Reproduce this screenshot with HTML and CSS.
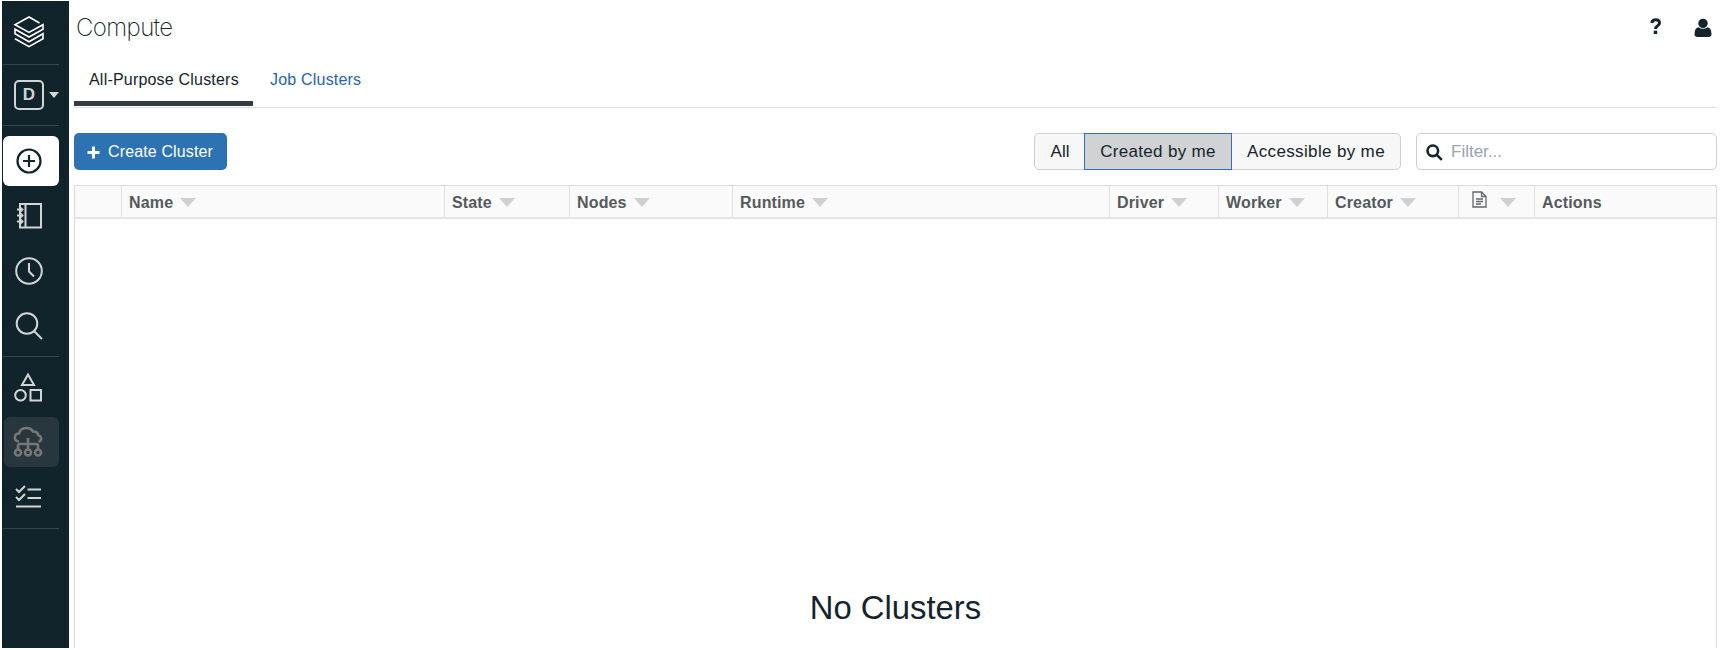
FILE: index.html
```html
<!DOCTYPE html>
<html lang="en">
<head>
<meta charset="utf-8">
<title>Compute</title>
<link rel="stylesheet" href="styles.css">
</head>
<body>
<div class="app">
  <nav class="sidebar">
    <a class="logo"><svg width="32" height="34" viewBox="0 0 32 34"><path d="M26.500 8 16 2 2 9.700 16 17.400 30 9.700V14.200L16 22 2 14.200V18.700L16 26.800 30 18.700V23.700L16 31.700 2 23.700"/></svg></a>
    <div class="workspace"><span class="badge">D</span><i class="caret"></i></div>
    <a class="item create"><svg width="28" height="28" viewBox="0 0 28 28"><circle cx="14" cy="14" r="11.5"/><path d="M14 8v12M8 14h12"/></svg></a>
    <a class="item"><svg width="28" height="28" viewBox="0 0 28 28"><path d="M5 2h21v23.5H5zM10.500 2v23.500M2 7.500h5M2 13.500h5M2 19.500h5"/><path class="thin" d="M5 5l3 2.500-3 3 3 3-3 3 3 3-3 3"/></svg></a>
    <a class="item"><svg width="28" height="28" viewBox="0 0 28 28"><circle cx="14" cy="14" r="12.800"/><path d="M14 6v8.500l5 5"/></svg></a>
    <a class="item"><svg width="28" height="28" viewBox="0 0 28 28"><circle cx="12" cy="11.500" r="10.300"/><path d="M19 19l8 8"/></svg></a>
    <div class="group">
      <a class="item"><svg width="30" height="30" viewBox="0 0 30 30"><path d="M15 2.500 21 13H9zM17.500 18h10.500v10.500H17.500z"/><circle cx="7.500" cy="23.300" r="5.300"/></svg></a>
      <a class="item active"><svg width="30" height="32" viewBox="0 0 30 32"><path d="M6 15.500C.5 15 .5 8 6 7.500 8 .5 17 .5 20 5.500c4 0 5 2 5 3.500 4 1 4 6 .5 6.500M15 12v12M5 24v-4q0-2 2-2h16q2 0 2 2v4"/><circle cx="5" cy="26.500" r="3"/><circle cx="15" cy="26.500" r="3"/><circle cx="25" cy="26.500" r="3"/></svg></a>
      <a class="item list"><svg width="28" height="28" viewBox="0 0 28 28"><path d="M2 6l3 3 6-6M2 14l3 3 6-6M13.500 6.500H27M13.500 15H27M2 23.500h25"/></svg></a>
    </div>
  </nav>
  <main class="main">
    <header class="header">
      <h1>Compute</h1>
      <div class="tools">
        <svg width="12" height="17" viewBox="0 0 12 17"><path class="question" d="M1.800 5C2.300 .8 9.500 .6 9.500 5c0 3-4 2.800-4 6"/><path class="solid" d="M3.700 12.700h3.500V16H3.700z"/></svg>
        <svg width="18" height="20" viewBox="0 0 18 20"><circle cx="9" cy="5.400" r="4.700"/><path d="M4.500 9.200Q9 12.500 13.500 9.200 17.500 10 17.500 16q0 3-3 3h-11q-3 0-3-3Q.5 10 4.500 9.200"/></svg>
      </div>
    </header>
    <div class="tabs"><a class="tab current"><span>All-Purpose Clusters</span></a><a class="tab"><span>Job Clusters</span></a></div>
    <div class="toolbar">
      <button class="primary"><svg width="13" height="13" viewBox="0 0 13 13"><path d="M6.500 .5v12M.5 6.500h12"/></svg><span>Create Cluster</span></button>
      <div class="filters">
        <button class="seg all">All</button><button class="seg mine">Created by me</button><button class="seg access">Accessible by me</button>
      </div>
      <div class="search"><svg width="17" height="17" viewBox="0 0 17 17"><circle cx="6.800" cy="6.800" r="5.300"/><path d="M10.800 10.800l5 5"/></svg><span>Filter...</span></div>
    </div>
    <section class="table">
      <div class="thead">
        <div></div>
        <div>Name<i class="sort"></i></div>
        <div>State<i class="sort"></i></div>
        <div>Nodes<i class="sort"></i></div>
        <div>Runtime<i class="sort"></i></div>
        <div>Driver<i class="sort"></i></div>
        <div>Worker<i class="sort"></i></div>
        <div>Creator<i class="sort"></i></div>
        <div class="doc"><svg width="15" height="17" viewBox="0 0 15 17"><path d="M1 1h8.500L14 5.500V16H1zM9.500 1v4.500H14M4 8h7M4 10.500h7M4 13h5"/></svg><i class="sort"></i></div>
        <div>Actions</div>
      </div>
      <div class="empty">No Clusters</div>
    </section>
  </main>
</div>
</body>
</html>
```
FILE: styles.css
```css
* { box-sizing: border-box; }
body { margin: 0; background: #fff; font-family: "Liberation Sans", Arial, sans-serif; font-size: 16px; color: #15242c; }
.app { display: flex; width: 1725px; height: 650px; padding: 1px 8px 2px 2px; overflow: hidden; }
svg { display: block; flex: none; fill: none; }

.sidebar { width: 67px; flex: none; background: #11232b; }
.sidebar svg { stroke: #d2d5d6; stroke-width: 2; }
.logo { display: flex; width: 56px; height: 64px; margin-left: 1px; padding: 14px 0 0 10px; border-bottom: 1px solid #3b464c; }
.sidebar .logo svg { stroke: #fff; stroke-width: 1.6; }
.workspace { display: flex; align-items: center; width: 56px; height: 61px; margin-left: 1px; padding: 0 0 0 11px; border-bottom: 1px solid #3b464c; }
.badge { display: flex; align-items: center; justify-content: center; width: 30px; height: 30px; border: 2px solid #d2d5d6; border-radius: 5px; color: #d2d5d6; font-weight: bold; font-size: 17px; }
.caret { margin-left: 5px; border: 5px solid transparent; border-top: 6px solid #d2d5d6; border-bottom: 0; }
.item { display: flex; align-items: center; justify-content: center; width: 55px; height: 50px; margin: 0 0 5px 2px; padding-right: 5px; border-radius: 6px; }
.item .thin { stroke-width: 1.2; }
.create { width: 56px; margin: 10px 0 5px 1px; background: #fff; }
.sidebar .create svg { stroke: #11232b; stroke-width: 2.2; }
.group { width: 56px; height: 173px; margin: 0 0 0 1px; padding-top: 5px; border: solid #3b464c; border-width: 1px 0; }
.group .item { margin-left: 1px; padding-right: 7px; }
.active { background: #28363d; }
.sidebar .active svg { stroke: #777776; stroke-width: 2.6; }
.list svg { stroke-width: 2; }

.main { display: flex; flex-direction: column; flex: 1; min-width: 0; padding-left: 5px; }
.header { display: flex; align-items: flex-start; justify-content: space-between; height: 54px; padding: 10px 5px 0 2px; }
h1 { margin: 0; font-family: Inter, "Liberation Sans", sans-serif; font-size: 24px; font-weight: 200; line-height: 34px; letter-spacing: -.6px; }
.tools { display: flex; gap: 32px; padding-top: 7px; }
.tools svg { fill: #15242c; }
.tools .question { fill: none; stroke: #15242c; stroke-width: 3; }

.tabs { display: flex; height: 53px; border-bottom: 1px solid #dcddde; letter-spacing: .2px; }
.tab { display: flex; height: 51px; padding: 0 17px; color: #2765aa; line-height: 49px; }
.tab.current { width: 179px; padding: 0 14px 0 15px; color: #15242c; border-bottom: 5px solid #353b44; }
.tab span { white-space: nowrap; }

.toolbar { display: flex; height: 77px; padding-top: 25px; }
button { font: inherit; white-space: nowrap; }
.primary { display: flex; align-items: center; width: 153px; height: 37px; padding: 1px 0 0 13px; gap: 8px; border: 0; border-radius: 5px; color: #fff; background: #2d72b3; letter-spacing: .13px; }
.primary svg { stroke: #fff; stroke-width: 3; }
.filters { display: flex; width: 367px; height: 37px; margin-left: auto; border: 1px solid #cdced0; border-radius: 5px; background: #f7f7f8; }
.seg { display: flex; align-items: center; justify-content: center; margin: 0; padding: 1px 0 0; border: 0; background: none; color: #15242c; font-size: 17px; letter-spacing: .3px; }
.all { width: 50px; letter-spacing: 0; }
.mine { width: 148px; height: 37px; margin: -1px 0 0 -1px; border: 1px solid #2d72b3; background: #d1d2d4; }
.access { width: 168px; letter-spacing: .35px; }
.search { display: flex; align-items: center; width: 301px; height: 37px; margin-left: 15px; padding: 1px 0 0 9px; gap: 8px; border: 1px solid #cdced0; border-radius: 5px; color: #98a3ae; font-size: 17px; }
.search svg { stroke: #15242c; stroke-width: 2.6; }

.table { display: flex; flex: 1; flex-direction: column; border: solid #d9dadb; border-width: 1px 1px 0; }
.thead { display: grid; grid-template-columns: 47px 323px 125px 163px 377px 109px 109px 131px 76px 1fr; height: 33px; border-bottom: 2px solid #e3e4e5; background: #fafafa; font-weight: bold; color: #55595d; letter-spacing: .15px; }
.thead > div { display: flex; align-items: center; padding: 2px 0 0 7px; border-right: 1px solid #dedfe0; }
.thead > div:last-child { border-right: 0; }
.sort { margin-left: 7px; border: 8px solid transparent; border-top: 9px solid #cfd0d2; border-bottom: 0; }
.thead .doc { padding-left: 13px; }
.doc svg { stroke: #62676b; stroke-width: 1.3; margin-bottom: 6px; }
.doc .sort { margin-left: 13px; }
.empty { padding-top: 367px; text-align: center; font-size: 32.8px; line-height: 44px; }
```
